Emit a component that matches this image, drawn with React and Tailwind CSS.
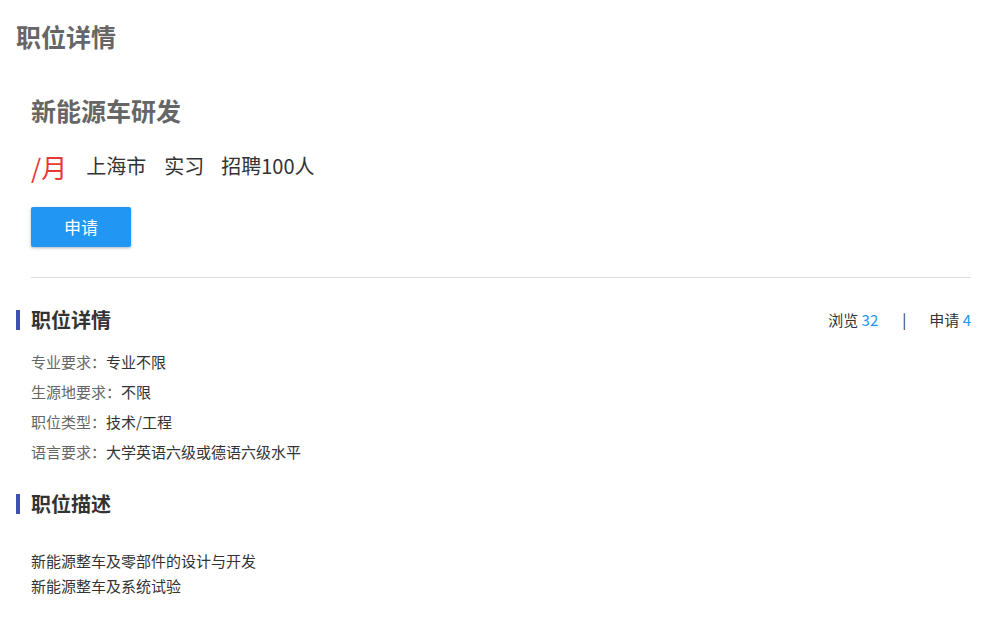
const font = { fontFamily: '"Microsoft YaHei", "Noto Sans CJK SC", "Liberation Sans", sans-serif' };

const details = [
  ['专业要求：', '专业不限'],
  ['生源地要求：', '不限'],
  ['职位类型：', '技术/工程'],
  ['语言要求：', '大学英语六级或德语六级水平'],
];

function SectionTitle({ children, right }) {
  return (
    <div className="flex items-center justify-between h-[24px]">
      <div className="flex items-center">
        <span className="w-[4px] h-[20px] bg-[#3f51b5]" />
        <h3 className="ml-[11px] text-[20px] leading-[24px] font-bold text-[#333]">{children}</h3>
      </div>
      {right}
    </div>
  );
}

export default function App() {
  return (
    <div className="min-h-screen bg-white pl-4 pr-[12px] pt-5" style={font}>
      <h1 className="text-[25px] leading-[32px] font-bold text-[#666]">职位详情</h1>

      {/* ── Job card ── */}
      <div className="pl-[15px] mt-[42px]">
        <h2 className="text-[25px] leading-[32px] font-bold text-[#666]">新能源车研发</h2>
        <div className="flex items-center mt-[24px] h-[32px] text-[#333]">
          <span className="text-[26px] text-[#e53935]">/月</span>
          <span className="text-[20px] ml-[19px]">上海市</span>
          <span className="text-[20px] ml-[18px]">实习</span>
          <span className="text-[20px] ml-[17px]">招聘100人</span>
        </div>
        <button className="mt-[25px] w-[100px] h-[40px] rounded-[2px] bg-[#2196f3] text-white text-[17px] shadow-[0_1px_3px_rgba(0,0,0,0.3)]">
          申请
        </button>
        <div className="mt-[30px] border-t border-[#ddd]" />
      </div>

      {/* ── Details ── */}
      <div className="mt-[30px]">
        <SectionTitle
          right={
            <div className="flex items-center text-[15px] text-[#333]">
              <span>浏览 <span className="text-[#2196f3] pr-[2px]">32</span></span>
              <span className="ml-[22px] mr-[23px]">|</span>
              <span>申请 <span className="text-[#2196f3]">4</span></span>
            </div>
          }
        >
          职位详情
        </SectionTitle>
        <div className="pl-[15px] mt-[15px] text-[15px]">
          {details.map(([k, v]) => (
            <div key={k} className="leading-[30px]">
              <span className="text-[#666]">{k}</span>
              <span className="text-[#333]">{v}</span>
            </div>
          ))}
        </div>
      </div>

      {/* ── Description ── */}
      <div className="mt-[25px]">
        <SectionTitle>职位描述</SectionTitle>
        <div className="pl-[15px] mt-[32px] text-[15px] leading-[25px] text-[#333]">
          <p>新能源整车及零部件的设计与开发</p>
          <p>新能源整车及系统试验</p>
        </div>
      </div>
    </div>
  );
}
